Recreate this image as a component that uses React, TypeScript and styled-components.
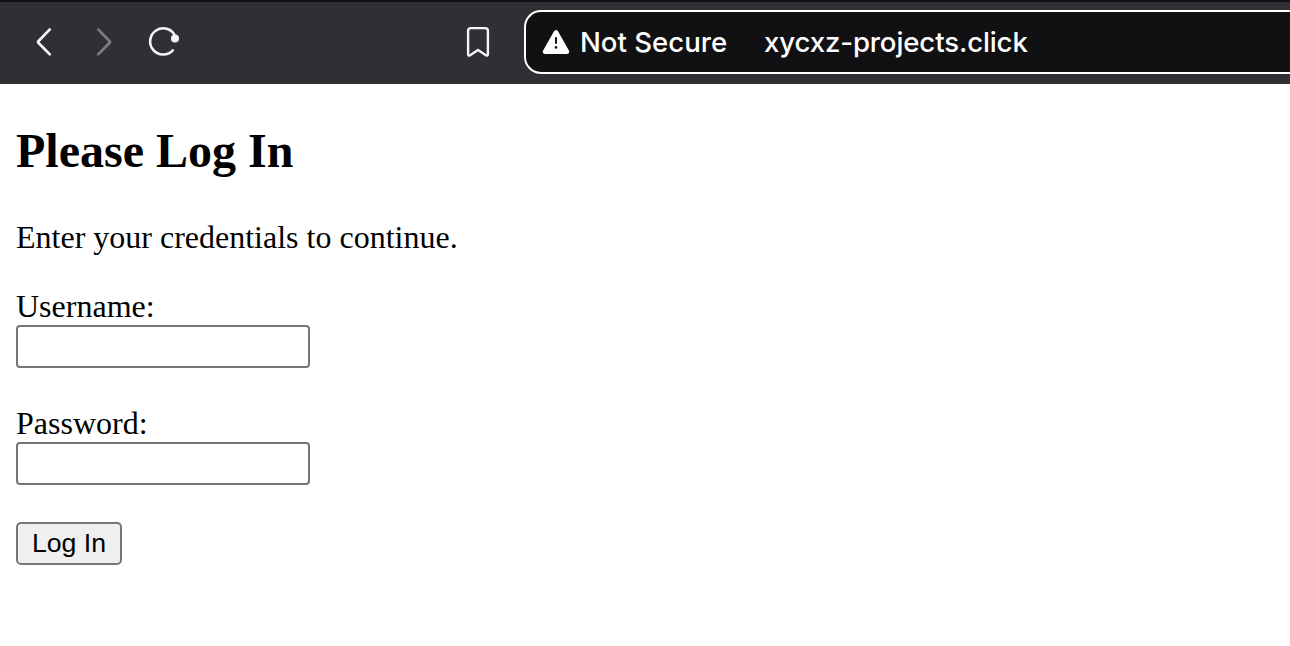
import React from "react";
import styled, { createGlobalStyle } from "styled-components";

const GlobalStyle = createGlobalStyle`
  * { box-sizing: border-box; }
  body { margin: 0; background: #fff; overflow: hidden; }
`;

const Page = styled.div`
  width: 100%;
  height: 646px;
  overflow: hidden;
  background: #fff;
  color: #000;
`;

const Toolbar = styled.header`
  display: flex;
  align-items: flex-start;
  height: 84px;
  padding: 8px 0 0 24px;
  border-top: 2px solid #111113;
  background: #303034;
`;

const ToolButton = styled.button<{ $gap?: number; $dim?: boolean }>`
  flex: none;
  width: 40px;
  height: 64px;
  margin: 0 ${(p) => p.$gap ?? 20}px 0 0;
  padding: 0;
  border: 0;
  background: none;
  color: ${(p) => (p.$dim ? "#7d7d80" : "#f5f5f7")};

  svg {
    display: block;
  }
`;

const AddressBar = styled.div`
  flex: 1;
  display: flex;
  align-items: center;
  height: 64px;
  padding-left: 16px;
  border: 2px solid #fff;
  border-right: 0;
  border-radius: 17px 0 0 17px;
  background: #111113;
  color: #fff;
  font: 450 27.6px/34px Inter, sans-serif;
  white-space: nowrap;
`;

const WarningIcon = styled.svg`
  flex: none;
  width: 28px;
  height: 28px;
  margin-right: 10px;
`;

const Security = styled.span`
  width: 184px;
`;

const Address = styled.span`
  letter-spacing: -0.12px;
`;

const Content = styled.main`
  display: flex;
  flex-direction: column;
  align-items: flex-start;
  padding: 40px 16px 0;
  font: 32px/36px "Liberation Serif", serif;
`;

const Title = styled.h2`
  margin: 0 0 41px;
  font-size: 48px;
  line-height: 54px;
`;

const Intro = styled.p`
  margin: 0 0 33px;
`;

const Field = styled.div`
  display: flex;
  flex-direction: column;
  gap: 1px;
  margin-bottom: 37px;
`;

const TextInput = styled.input`
  width: 294px;
  height: 43px;
  margin: 0;
  padding: 2px 4px;
  border: 2px solid #767676;
  border-radius: 4px;
  background: #fff;
  font: 26.667px "Liberation Sans", sans-serif;
`;

const SubmitButton = styled.button`
  width: 106px;
  height: 43px;
  padding: 0;
  border: 2px solid #767676;
  border-radius: 5px;
  background: #efefef;
  color: #000;
  font: 26.667px/39px "Liberation Sans", sans-serif;
`;

export default function App() {
  return (
    <Page>
      <GlobalStyle />
      <Toolbar>
        <ToolButton aria-label="Back">
          <svg width="40" height="64" fill="none" stroke="currentColor" strokeWidth="2.7" strokeLinecap="round" strokeLinejoin="round">
            <path d="M25.8 19.4 14.6 31q-1 1 0 2L25.8 44.4" />
          </svg>
        </ToolButton>
        <ToolButton aria-label="Forward" $dim>
          <svg width="40" height="64" fill="none" stroke="currentColor" strokeWidth="2.7" strokeLinecap="round" strokeLinejoin="round">
            <path d="M14.2 19.4 25.4 31q1 1 0 2L14.2 44.4" />
          </svg>
        </ToolButton>
        <ToolButton aria-label="Reload" $gap={274}>
          <svg width="40" height="64" fill="none" stroke="currentColor" strokeWidth="2.6" strokeLinecap="round">
            <path d="M28.8 40.4A13.1 13.1 0 1 1 31 25.7" />
            <circle cx="31" cy="28.6" r="4" fill="currentColor" stroke="none" />
          </svg>
        </ToolButton>
        <ToolButton aria-label="Bookmark" $gap={26}>
          <svg width="40" height="64" fill="none" stroke="currentColor" strokeWidth="2.4" strokeLinejoin="round">
            <path d="M12.9 18.1h14.2q2.8 0 2.8 2.8v23.1q0 2.4-2 1.2l-7.9-5.2-7.9 5.2q-2 1.2-2-1.2V20.9q0-2.8 2.8-2.8Z" />
          </svg>
        </ToolButton>
        <AddressBar>
          <WarningIcon viewBox="0 0 28 28">
            <path
              d="M14 4.4 3.1 23.7h21.8L14 4.4Z"
              fill="#fff"
              stroke="#fff"
              strokeWidth="4.6"
              strokeLinejoin="round"
            />
            <path d="M14 10v5" stroke="#111113" strokeWidth="2" strokeLinecap="round" />
            <circle cx="14" cy="19.4" r="1.3" fill="#111113" />
          </WarningIcon>
          <Security>Not Secure</Security>
          <Address>xycxz-projects.click</Address>
        </AddressBar>
      </Toolbar>
      <Content>
        <Title>Please Log In</Title>
        <Intro>Enter your credentials to continue.</Intro>
        <Field>
          <label htmlFor="username">Username:</label>
          <TextInput id="username" type="text" />
        </Field>
        <Field>
          <label htmlFor="password">Password:</label>
          <TextInput id="password" type="password" />
        </Field>
        <SubmitButton type="button">Log In</SubmitButton>
      </Content>
    </Page>
  );
}
